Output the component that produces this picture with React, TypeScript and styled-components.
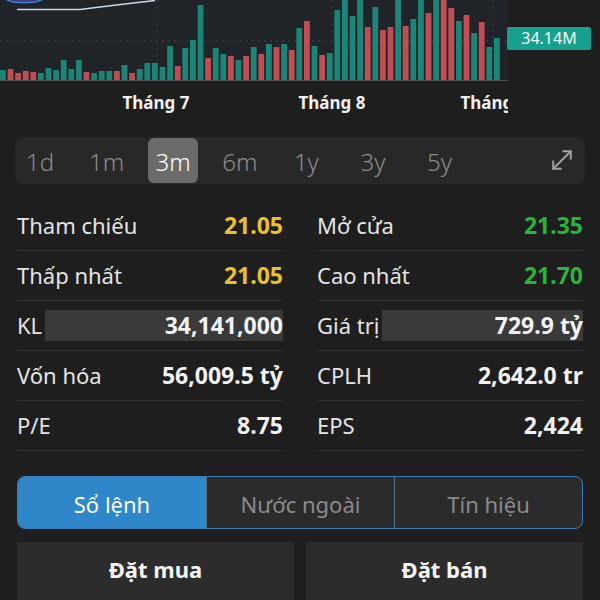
import React from "react";
import styled, { createGlobalStyle } from "styled-components";
import { MoveDiagonal } from "lucide-react";

const GlobalStyle = createGlobalStyle`
  html, body {
    margin: 0;
    padding: 0;
    background: #1e1e1e;
    font-family: "Noto Sans", Roboto, "DejaVu Sans", sans-serif;
    overflow: hidden;
  }
`;

type Bar = [number, "t" | "r"];

// top y of each volume bar (baseline is 80)
const bars: Bar[] = [
  [70, "t"], [69, "r"], [73, "r"], [71, "r"], [72, "r"], [73, "t"], [68, "t"], [70, "t"],
  [60, "t"], [69, "t"], [60, "t"], [72, "r"], [73, "t"], [71, "t"], [71, "t"], [71, "r"],
  [65, "t"], [73, "r"], [69, "t"], [63, "t"], [63, "t"], [67, "t"], [46, "t"], [66, "r"],
  [48, "t"], [40, "t"], [5, "t"], [58, "r"], [48, "t"], [54, "t"], [56, "r"], [60, "t"],
  [56, "r"], [47, "t"], [54, "r"], [44, "t"], [47, "r"], [44, "t"], [50, "r"], [28, "t"],
  [21, "r"], [46, "t"], [55, "r"], [53, "t"], [10, "t"], [-5, "t"], [16, "t"], [-5, "t"],
  [27, "r"], [7, "t"], [30, "r"], [27, "r"], [-5, "t"], [26, "r"], [19, "t"], [-5, "t"],
  [13, "r"], [-5, "t"], [-5, "r"], [8, "r"], [21, "t"], [15, "r"], [33, "t"], [22, "r"],
  [47, "t"], [38, "t"],
];

const ranges = ["1d", "1m", "3m", "6m", "1y", "3y", "5y"];

type Tone = "yellow" | "green" | "white";

interface Stat {
  label: string;
  value: string;
  tone: Tone;
  masked?: boolean;
}

const leftStats: Stat[] = [
  { label: "Tham chiếu", value: "21.05", tone: "yellow" },
  { label: "Thấp nhất", value: "21.05", tone: "yellow" },
  { label: "KL", value: "34,141,000", tone: "white", masked: true },
  { label: "Vốn hóa", value: "56,009.5 tỷ", tone: "white" },
  { label: "P/E", value: "8.75", tone: "white" },
];

const rightStats: Stat[] = [
  { label: "Mở cửa", value: "21.35", tone: "green" },
  { label: "Cao nhất", value: "21.70", tone: "green" },
  { label: "Giá trị", value: "729.9 tỷ", tone: "white", masked: true },
  { label: "CPLH", value: "2,642.0 tr", tone: "white" },
  { label: "EPS", value: "2,424", tone: "white" },
];

const toneColor: Record<Tone, string> = {
  yellow: "#e9c12f",
  green: "#27b53a",
  white: "#f2f2f2",
};

function VolumeChart() {
  return (
    <ChartSvg width={508} height={122} viewBox="0 0 508 122">
      <rect x={0} y={0} width={508} height={81} fill="#202428" />
      <line x1={0} y1={41} x2={506} y2={41} stroke="#40454c" strokeDasharray="2 4" />
      {[157, 332, 493].map((x) => (
        <line key={x} x1={x} y1={0} x2={x} y2={80} stroke="#3a3f46" strokeDasharray="2 4" />
      ))}
      {bars.map(([top, c], i) => (
        <rect
          key={i}
          x={i * 7.6}
          y={top}
          width={5.8}
          height={80 - top}
          fill={c === "t" ? "#1d8577" : "#c04c54"}
        />
      ))}
      <line x1={0} y1={80.5} x2={508} y2={80.5} stroke="#4a4f55" strokeWidth={1} />
      <polyline
        points="5,-1 12,2 24,3 36,2 44,-1"
        fill="#4b3d8a"
        stroke="#3a9ee6"
        strokeWidth={1.2}
      />
      <polyline
        points="17,9.5 80,9.5 96,7.5 125,4 155,0.5"
        fill="none"
        stroke="#c9d8e6"
        strokeWidth={1.5}
      />
      <AxisText x={156} y={109}>Tháng 7</AxisText>
      <AxisText x={332} y={109}>Tháng 8</AxisText>
      <AxisText x={494} y={109}>Tháng 9</AxisText>
    </ChartSvg>
  );
}

function StatColumn({ items }: { items: Stat[] }) {
  return (
    <Column>
      {items.map((s) => (
        <StatRow key={s.label}>
          <StatLabel>{s.label}</StatLabel>
          {s.masked ? (
            <Masked>
              <StatValue $tone={s.tone}>{s.value}</StatValue>
            </Masked>
          ) : (
            <StatValue $tone={s.tone}>{s.value}</StatValue>
          )}
        </StatRow>
      ))}
    </Column>
  );
}

export default function App() {
  return (
    <>
      <GlobalStyle />
      <Page>
        <ChartRow>
          <VolumeChart />
          <PriceAxis>
            <PriceBadge>34.14M</PriceBadge>
          </PriceAxis>
        </ChartRow>

        <RangeBar>
          {ranges.map((r) => (
            <RangeItem key={r} $active={r === "3m"}>
              {r}
            </RangeItem>
          ))}
          <ExpandButton>
            <MoveDiagonal size={30} strokeWidth={1.6} color="#a0a0a0" />
          </ExpandButton>
        </RangeBar>

        <StatsGrid>
          <StatColumn items={leftStats} />
          <StatColumn items={rightStats} />
        </StatsGrid>

        <Tabs>
          <Tab $active>Sổ lệnh</Tab>
          <Tab>Nước ngoài</Tab>
          <Tab>Tín hiệu</Tab>
        </Tabs>

        <Actions>
          <ActionButton>Đặt mua</ActionButton>
          <ActionButton>Đặt bán</ActionButton>
        </Actions>
      </Page>
    </>
  );
}

const Page = styled.div`
  width: 600px;
  height: 600px;
  overflow: hidden;
  background: #1e1e1e;
  display: flex;
  flex-direction: column;
`;

const ChartRow = styled.div`
  display: flex;
  height: 122px;
`;

const ChartSvg = styled.svg`
  display: block;
  flex-shrink: 0;
  overflow: hidden;
`;

const AxisText = styled.text`
  fill: #f0f0f0;
  font-size: 17px;
  font-weight: 700;
  text-anchor: middle;
`;

const PriceAxis = styled.div`
  flex: 1;
  padding-top: 27px;
`;

const PriceBadge = styled.div`
  width: 84px;
  height: 23px;
  margin-left: -1px;
  background: #17a08c;
  border-radius: 2px;
  color: #f4fbfa;
  font-size: 16px;
  line-height: 23px;
  text-align: center;
`;

const RangeBar = styled.div`
  margin: 15px 15px 0;
  height: 48px;
  background: #282828;
  border-radius: 9px;
  display: flex;
  align-items: center;
  gap: 16.6px;
`;

const RangeItem = styled.div<{ $active?: boolean }>`
  width: 50px;
  height: 45px;
  border-radius: 6px;
  display: flex;
  align-items: center;
  justify-content: center;
  padding-top: 2px;
  box-sizing: border-box;
  font-size: 24px;
  font-weight: 300;
  color: ${(p) => (p.$active ? "#ffffff" : "#8c8c8c")};
  background: ${(p) => (p.$active ? "#6b6b6b" : "transparent")};
`;

const ExpandButton = styled.div`
  margin-left: auto;
  margin-right: 8px;
  display: flex;
  align-items: center;
`;

const StatsGrid = styled.div`
  margin: 17px 17px 0;
  display: grid;
  grid-template-columns: 1fr 1fr;
  column-gap: 34px;
`;

const Column = styled.div`
  display: flex;
  flex-direction: column;
`;

const StatRow = styled.div`
  height: 49px;
  border-bottom: 1px solid #333333;
  display: flex;
  align-items: center;
`;

const StatLabel = styled.div`
  font-size: 22px;
  color: #e4e4e4;
  white-space: nowrap;
`;

const Masked = styled.div`
  flex: 1;
  height: 31px;
  margin-left: 3px;
  background: #3a3a3a;
  display: flex;
  align-items: center;
  justify-content: flex-end;
`;

const StatValue = styled.div<{ $tone: Tone }>`
  margin-left: auto;
  font-size: 23px;
  font-weight: 700;
  color: ${(p) => toneColor[p.$tone]};
  white-space: nowrap;
`;

const Tabs = styled.div`
  margin: 25px 17px 0;
  height: 55px;
  box-sizing: border-box;
  border: 1px solid #3a7cb8;
  border-radius: 8px;
  overflow: hidden;
  display: grid;
  grid-template-columns: 1fr 1fr 1fr;
  background: #2b2b2b;
`;

const Tab = styled.div<{ $active?: boolean }>`
  display: flex;
  align-items: center;
  justify-content: center;
  padding-top: 4px;
  font-size: 22px;
  color: ${(p) => (p.$active ? "#ffffff" : "#8a8a8a")};
  background: ${(p) => (p.$active ? "#2f86c8" : "transparent")};
  & + & {
    border-left: 1px solid #56708a;
  }
`;

const Actions = styled.div`
  margin: 13px 17px 0;
  display: grid;
  grid-template-columns: 1fr 1fr;
  column-gap: 12px;
`;

const ActionButton = styled.div`
  height: 58px;
  background: #2c2c2c;
  display: flex;
  align-items: center;
  justify-content: center;
  padding-bottom: 4px;
  box-sizing: border-box;
  font-size: 22px;
  font-weight: 700;
  color: #f4f4f4;
`;
